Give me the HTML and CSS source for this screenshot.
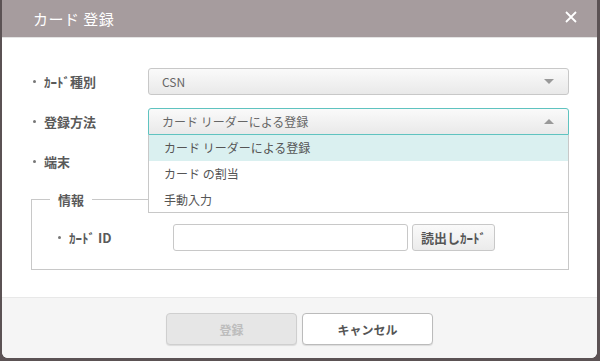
FILE: index.html
```html
<!DOCTYPE html>
<html lang="ja">
<head>
    <meta charset="UTF-8">
    <title>カード 登録</title>
    <link rel="stylesheet" href="styles.css">
</head>
<body>
    <div class="dialog">
        <header class="dialog-header">
            <h1>カード 登録</h1>
            <svg class="close" width="12" height="12" viewBox="0 0 12 12">
                <path d="M1 1 L11 11 M11 1 L1 11" stroke="#fff" stroke-width="1.8" fill="none"/>
            </svg>
        </header>

        <main class="dialog-body">
            <div class="row">
                <label class="label">ｶｰﾄﾞ種別</label>
                <div class="select">
                    <span>CSN</span>
                    <span class="arrow down"></span>
                </div>
            </div>

            <div class="row">
                <label class="label">登録方法</label>
                <div class="select-wrap">
                    <div class="select open">
                        <span>カード リーダーによる登録</span>
                        <span class="arrow up"></span>
                    </div>
                    <ul class="options">
                        <li class="active">カード リーダーによる登録</li>
                        <li>カード の割当</li>
                        <li>手動入力</li>
                    </ul>
                </div>
            </div>

            <div class="row">
                <label class="label">端末</label>
                <div class="select">
                    <span></span>
                    <span class="arrow down"></span>
                </div>
            </div>

            <fieldset class="info">
                <legend>情報</legend>
                <div class="row">
                    <label class="label">ｶｰﾄﾞ ID</label>
                    <input type="text" class="text-input">
                    <button class="btn-read">読出しｶｰﾄﾞ</button>
                </div>
            </fieldset>
        </main>

        <footer class="dialog-footer">
            <button class="btn" disabled>登録</button>
            <button class="btn">キャンセル</button>
        </footer>
    </div>
</body>
</html>
```

FILE: styles.css
```css
:root {
    --frame: #5b5254;
    --header-bg: #a69c9e;
    --text: #444;
    --border: #c8c8c8;
    --teal: #5fc3c0;
    --hover: #daf0f0;
}

body {
    margin: 0;
    background: var(--frame);
    font-family: "Noto Sans CJK JP", "Noto Sans", Roboto, sans-serif;
    color: var(--text);
}

.dialog {
    width: 595px;
    height: 358px;
    margin-left: 2px;
    background: #fff;
    border-radius: 0 0 6px 6px;
    display: flex;
    flex-direction: column;
    overflow: hidden;
}

.dialog-header {
    height: 37px;
    background: var(--header-bg);
    border-bottom: 1px solid #e4e4e4;
    display: flex;
    align-items: center;
    justify-content: space-between;
    padding: 0 20px 0 31px;
    color: #fff;
}

.dialog-header h1 {
    margin: 0;
    font-size: 15px;
    font-weight: 400;
    letter-spacing: 0.5px;
}

.close {
    margin-top: -3px;
}

.dialog-body {
    flex: 1;
    padding: 30px 28px 0 29px;
    display: flex;
    flex-direction: column;
    gap: 13px;
}

.row {
    display: flex;
    align-items: center;
    height: 27px;
}

.label {
    width: 117px;
    flex-shrink: 0;
    font-size: 13px;
    font-weight: 700;
    color: #5a5a5a;
    display: flex;
    align-items: center;
}

.label::before {
    content: "";
    width: 3px;
    height: 3px;
    background: #777;
    border-radius: 50%;
    margin-right: 8px;
    margin-left: 2px;
}

.select-wrap {
    flex: 1;
    position: relative;
}

.select {
    flex: 1;
    height: 27px;
    box-sizing: border-box;
    border: 1px solid var(--border);
    border-radius: 3px;
    background: linear-gradient(#fafafa, #e9e9e9);
    display: flex;
    align-items: center;
    justify-content: space-between;
    padding: 0 14px 0 13px;
    font-size: 12px;
    color: #666;
}

.select.open {
    border-color: var(--teal);
    border-radius: 3px 3px 0 0;
}

.arrow {
    width: 0;
    height: 0;
    border-left: 5px solid transparent;
    border-right: 5px solid transparent;
}

.arrow.down {
    border-top: 5px solid #999;
}

.arrow.up {
    border-bottom: 5px solid #999;
}

.options {
    position: absolute;
    top: 27px;
    left: 0;
    right: 0;
    margin: 0;
    padding: 0;
    list-style: none;
    background: #fff;
    border: 1px solid var(--border);
    border-top: none;
    z-index: 10;
}

.options li {
    height: 26px;
    line-height: 26px;
    padding: 0 15px;
    font-size: 12px;
    color: #555;
}

.options li:last-child {
    height: 25px;
}

.options li.active {
    background: var(--hover);
}

.info {
    margin: 2px 0 0 0;
    padding: 15px 20px 18px 24px;
    border: 1px solid var(--border);
    min-width: 0;
}

.info legend {
    margin-left: -6px;
    padding: 0 8px;
    font-size: 13px;
    font-weight: 700;
    color: #5a5a5a;
}

.text-input {
    width: 235px;
    height: 27px;
    box-sizing: border-box;
    border: 1px solid var(--border);
    border-radius: 3px;
    margin: 0;
}

.btn-read {
    margin-left: 4px;
    width: 83px;
    height: 27px;
    border: 1px solid var(--border);
    border-radius: 3px;
    background: linear-gradient(#fafafa, #ebebeb);
    font-family: inherit;
    font-size: 13px;
    font-weight: 700;
    color: #555;
}

.dialog-footer {
    height: 61px;
    box-sizing: border-box;
    background: #f5f5f5;
    border-top: 1px solid #e8e8e8;
    display: flex;
    justify-content: center;
    align-items: center;
    gap: 5px;
    padding-top: 2px;
}

.btn {
    width: 131px;
    height: 32px;
    border: 1px solid #bbb;
    border-radius: 4px;
    background: #fff;
    font-family: inherit;
    font-size: 12px;
    font-weight: 700;
    color: #555;
    box-shadow: 0 1px 1px rgba(0, 0, 0, 0.1);
}

.btn:disabled {
    background: #e6e6e6;
    color: #bdbdbd;
    border-color: #cfcfcf;
}
```
